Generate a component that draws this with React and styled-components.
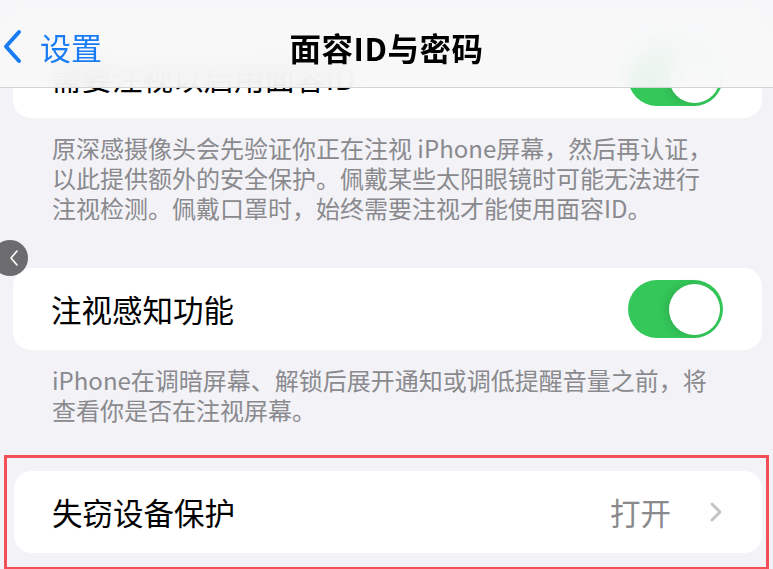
import React from "react";
import styled, { createGlobalStyle } from "styled-components";

const GlobalStyle = createGlobalStyle`
  html, body {
    margin: 0;
    padding: 0;
    height: 569px;
    overflow: hidden;
    background: #f2f2f7;
    font-family: "Noto Sans CJK SC", "Noto Sans", sans-serif;
    -webkit-font-smoothing: antialiased;
  }
`;

const Screen = styled.div`
  position: relative;
  width: 773px;
  height: 569px;
  overflow: hidden;
  background: #f2f2f7;
`;

const NavBar = styled.header`
  position: absolute;
  top: 0;
  left: 0;
  right: 0;
  height: 88px;
  z-index: 10;
  display: grid;
  grid-template-columns: 1fr auto 1fr;
  align-items: center;
  padding-top: 6px;
  box-sizing: border-box;
  background: rgba(248, 248, 249, 0.93);
  backdrop-filter: blur(12px);
  border-bottom: 1px solid #d4d4d6;
`;

const Back = styled.div`
  display: flex;
  align-items: center;
  gap: 18px;
  padding-left: 2px;
  color: #1a7cf5;
  font-size: 31px;
  line-height: 1;
`;

const Title = styled.h1`
  margin: 0;
  font-size: 31.5px;
  font-weight: 600;
  color: #000;
  letter-spacing: 0.5px;
`;

const Content = styled.main`
  padding-top: 36px;
`;

const Card = styled.div`
  margin: 0 11px 0 13px;
  height: 82px;
  background: #fff;
  border-radius: 18px;
  display: flex;
  align-items: center;
  justify-content: space-between;
  padding: 0 39px 0 38px;
  box-sizing: border-box;
`;

const Label = styled.span`
  font-size: 30.5px;
  color: #000;
`;

const Footer = styled.p`
  margin: 0;
  width: 670px;
  padding: 15px 0 ${(p) => p.$gap}px 52px;
  font-size: 24px;
  line-height: 30px;
  color: #8a8a8e;
  height: ${(p) => p.$h}px;
  box-sizing: content-box;
`;

const Switch = styled.div`
  width: 95px;
  height: 58px;
  border-radius: 29px;
  background: #34c759;
  position: relative;
  flex-shrink: 0;
  &::after {
    content: "";
    position: absolute;
    top: 3.5px;
    right: 3px;
    width: 51px;
    height: 51px;
    border-radius: 50%;
    background: #fff;
    box-shadow: -3px 0 8px rgba(0, 0, 0, 0.12);
  }
`;

const Value = styled.div`
  display: flex;
  align-items: center;
  gap: 38px;
  color: #8a8a8e;
  font-size: 30.5px;
`;

const Highlight = styled.div`
  margin: 30px 0 0 4px;
  width: 765px;
  border: 3px solid #f25056;
  padding: 13px 4px 14px 7px;
  box-sizing: border-box;
  ${Card} {
    margin: 0;
  }
`;

const Bubble = styled.div`
  position: absolute;
  left: -8px;
  top: 240px;
  width: 36px;
  height: 36px;
  border-radius: 50%;
  background: #6c6c6e;
  display: flex;
  align-items: center;
  justify-content: center;
  padding-left: 8px;
  box-sizing: border-box;
  z-index: 5;
`;

function BackChevron() {
  return (
    <svg width="20" height="35" viewBox="0 0 20 35">
      <polyline
        points="17,3 4,17.5 17,32"
        fill="none"
        stroke="#1a7cf5"
        strokeWidth="4"
        strokeLinecap="round"
        strokeLinejoin="round"
      />
    </svg>
  );
}

function Chevron() {
  return (
    <svg width="14" height="22" viewBox="0 0 14 22">
      <polyline
        points="3,3 11,11 3,19"
        fill="none"
        stroke="#c4c4c7"
        strokeWidth="3"
        strokeLinecap="round"
        strokeLinejoin="round"
      />
    </svg>
  );
}

export default function App() {
  return (
    <Screen>
      <GlobalStyle />
      <NavBar>
        <Back>
          <BackChevron />
          <span>设置</span>
        </Back>
        <Title>面容ID与密码</Title>
        <div />
      </NavBar>

      <Content>
        <Card>
          <Label>需要注视以启用面容ID</Label>
          <Switch />
        </Card>
        <Footer $h={90} $gap={45}>
          原深感摄像头会先验证你正在注视 iPhone屏幕，然后再认证，以此提供额外的安全保护。佩戴某些太阳眼镜时可能无法进行注视检测。佩戴口罩时，始终需要注视才能使用面容ID。
        </Footer>
        <Card>
          <Label>注视感知功能</Label>
          <Switch />
        </Card>
        <Footer $h={60} $gap={0}>
          iPhone在调暗屏幕、解锁后展开通知或调低提醒音量之前，将查看你是否在注视屏幕。
        </Footer>
        <Highlight>
          <Card>
            <Label>失窃设备保护</Label>
            <Value>
              <span>打开</span>
              <Chevron />
            </Value>
          </Card>
        </Highlight>
      </Content>

      <Bubble>
        <svg width="12" height="18" viewBox="0 0 12 18">
          <polyline
            points="9,2 3,9 9,16"
            fill="none"
            stroke="#fff"
            strokeWidth="1.6"
            strokeLinecap="round"
            strokeLinejoin="round"
          />
        </svg>
      </Bubble>
    </Screen>
  );
}
